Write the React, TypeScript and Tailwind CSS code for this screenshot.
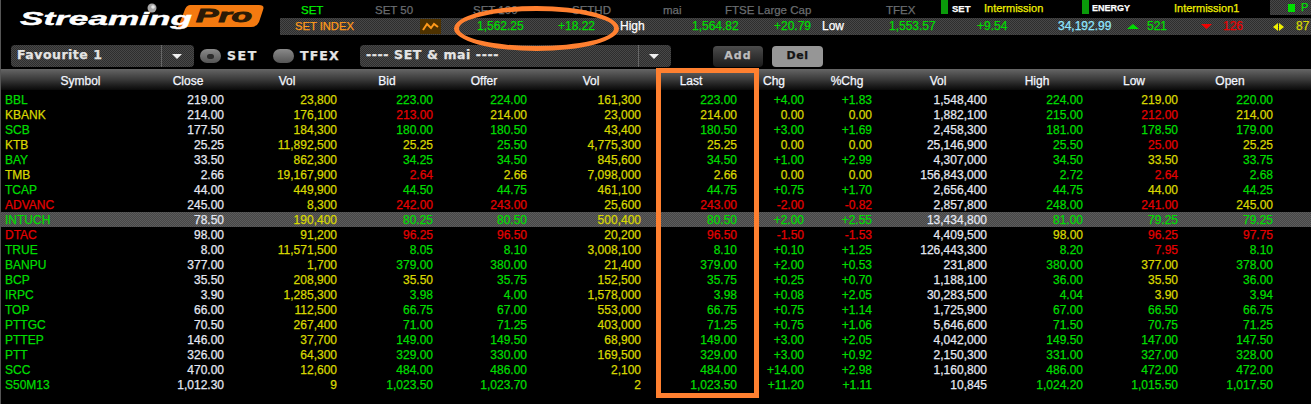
import React from "react";

const tone: Record<string, string> = {
  g: "text-[#00dc00]",
  y: "text-[#d8d800]",
  r: "text-[#e40000]",
  w: "text-[#e4e8f2]",
};

const rows = [
  "gBBL w219.00 y23,800 g223.00 g224.00 y161,300 g223.00 g+4.00 g+1.83 w1,548,400 g224.00 y219.00 g220.00",
  "yKBANK w214.00 y176,100 r213.00 y214.00 y23,000 y214.00 y0.00 y0.00 w1,882,100 g215.00 r212.00 y214.00",
  "gSCB w177.50 y184,300 g180.00 g180.50 y43,400 g180.50 g+3.00 g+1.69 w2,458,300 g181.00 g178.50 g179.00",
  "yKTB w25.25 y11,892,500 y25.25 g25.50 y4,775,300 y25.25 y0.00 y0.00 w25,146,900 g25.50 r25.00 y25.25",
  "gBAY w33.50 y862,300 g34.25 g34.50 y845,600 g34.50 g+1.00 g+2.99 w4,307,000 g34.50 y33.50 g33.75",
  "yTMB w2.66 y19,167,900 r2.64 y2.66 y7,098,000 y2.66 y0.00 y0.00 w156,843,000 g2.72 r2.64 g2.68",
  "gTCAP w44.00 y449,900 g44.50 g44.75 y461,100 g44.75 g+0.75 g+1.70 w2,656,400 g44.75 y44.00 g44.25",
  "rADVANC w245.00 y8,300 r242.00 r243.00 y25,600 r243.00 r-2.00 r-0.82 w2,857,800 g248.00 r241.00 y245.00",
  "gINTUCH w78.50 y190,400 g80.25 g80.50 y500,400 g80.50 g+2.00 g+2.55 w13,434,800 g81.00 g79.25 g79.25",
  "rDTAC w98.00 y91,200 r96.25 r96.50 y20,200 r96.50 r-1.50 r-1.53 w4,409,500 y98.00 r96.25 r97.75",
  "gTRUE w8.00 y11,571,500 g8.05 g8.10 y3,008,100 g8.10 g+0.10 g+1.25 w126,443,300 g8.20 r7.95 g8.10",
  "gBANPU w377.00 y1,700 g379.00 g380.00 y21,400 g379.00 g+2.00 g+0.53 w231,800 g380.00 y377.00 g378.00",
  "gBCP w35.50 y208,900 y35.50 g35.75 y152,500 g35.75 g+0.25 g+0.70 w1,188,100 g36.00 y35.50 g36.00",
  "gIRPC w3.90 y1,285,300 g3.98 g4.00 y1,578,000 g3.98 g+0.08 g+2.05 w30,283,500 g4.04 y3.90 g3.94",
  "gTOP w66.00 y112,500 g66.75 g67.00 y553,000 g66.75 g+0.75 g+1.14 w1,725,900 g67.00 g66.50 g66.75",
  "gPTTGC w70.50 y267,400 g71.00 g71.25 y403,000 g71.25 g+0.75 g+1.06 w5,646,600 g71.50 g70.75 g71.25",
  "gPTTEP w146.00 y37,700 g149.00 g149.50 y68,900 g149.00 g+3.00 g+2.05 w4,042,000 g149.50 g147.00 g147.50",
  "gPTT w326.00 y64,300 g329.00 g330.00 y169,500 g329.00 g+3.00 g+0.92 w2,150,300 g331.00 g327.00 g328.00",
  "gSCC w470.00 y12,600 g484.00 g486.00 y2,100 g484.00 g+14.00 g+2.98 w1,160,800 g486.00 g472.00 g472.00",
  "gS50M13 w1,012.30 y9 g1,023.50 g1,023.70 y2 g1,023.50 g+11.20 g+1.11 w10,845 g1,024.20 g1,015.50 g1,017.50",
];

const headers = ["Symbol", "Close", "Vol", "Bid", "Offer", "Vol", "Last", "Chg", "%Chg", "Vol", "High", "Low", "Open"];

const checker = "bg-[repeating-conic-gradient(#484848_0_25%,#2e2e2e_0_50%)] bg-[length:2px_2px]";
const checkerLight = "bg-[repeating-conic-gradient(#5c5c5c_0_25%,#464646_0_50%)] bg-[length:2px_2px]";
const rowCols =
  "grid-cols-[149px_74px_113px_96px_94px_114px_96px_67px_68px_115px_96px_95px_95px_1fr]";
const wide = "font-['DejaVu_Sans',sans-serif] font-bold text-[#e4e4e4]";

const Logo = () => (
  <svg width="279" height="45" viewBox="1 0 279 45" className="shrink-0">
    <path
      d="M190 5H259Q265 5 263 10L259 22Q257 27 251 27H178L184 12Q186 5 190 5Z"
      fill="#f47a10"
    />
    <text
      x="196"
      y="22"
      fontSize="19"
      fontWeight="700"
      fontStyle="italic"
      fontFamily="Liberation Sans, sans-serif"
      textLength="56"
      lengthAdjust="spacingAndGlyphs"
      fill="#2b1a06"
      stroke="#2b1a06"
      strokeWidth="0.9"
    >
      Pro
    </text>
    <text
      x="20"
      y="25"
      fontSize="18"
      fontWeight="700"
      fontStyle="italic"
      fontFamily="Liberation Sans, sans-serif"
      textLength="172"
      lengthAdjust="spacingAndGlyphs"
      fill="#ffffff"
      stroke="#ffffff"
      strokeWidth="0.4"
    >
      Streaming
    </text>
    <circle cx="152" cy="8" r="4.5" fill="#a8a8a8" />
    <circle cx="153" cy="7" r="1.8" fill="#e8e8e8" />
  </svg>
);

const Caret = () => (
  <svg width="10" height="5" viewBox="0 0 10 5">
    <path d="M0 0H10L5 5Z" fill="#f0f0f0" />
  </svg>
);

const Select = ({ label, className }: { label: string; className: string }) => (
  <div className={`flex h-[22px] items-stretch rounded-[4px] ${checker} ${className}`}>
    <span className={`flex-1 pl-[6px] text-[12.5px] leading-[20px] ${wide}`}>{label}</span>
    <span className="flex w-[33px] items-center justify-center border-l border-[#666] pr-[3px]">
      <Caret />
    </span>
  </div>
);

const Radio = ({ on }: { on?: boolean }) => (
  <span className="flex h-[14px] w-[21px] items-center justify-center rounded-full bg-gradient-to-b from-[#8a8a8a] to-[#555]">
    {on && <span className="h-[5px] w-[7px] rounded-full bg-[#2c2c2c]" />}
  </span>
);

const App = () => {
  return (
    <div className="relative h-[404px] w-[1311px] overflow-hidden border-l border-[#555] bg-black font-['Liberation_Sans',Arial,sans-serif] text-[12px] [-webkit-text-stroke-width:0.25px]">
      <div className="flex h-[35px] items-start">
        <div className="h-[35px] w-[279px] shrink-0 overflow-visible">
          <Logo />
        </div>
        <div className="flex-1">
          <div className="grid h-[18px] grid-cols-[74px_98px_99px_91px_62px_161px_55px_11px_32px_98px_10px_82px_96px_41px] items-start pl-[21px] text-[11.5px] leading-[20px] text-[#6a6d70]">
            <span className="text-[#00f000]">SET</span>
            <span>SET 50</span>
            <span>SET 100</span>
            <span>SETHD</span>
            <span>mai</span>
            <span>FTSE Large Cap</span>
            <span>TFEX</span>
            <span className="h-[14px] w-[7px] bg-[#0a9a0a]" />
            <span className="text-[9.5px] leading-[17px] font-bold text-white">SET</span>
            <span className="text-[11px] leading-[17px] text-[#f0f000]">Intermission</span>
            <span className="h-[14px] w-[7px] bg-[#0a9a0a]" />
            <span className="text-[9px] leading-[17px] font-bold text-white">ENERGY</span>
            <span className="text-[11px] leading-[17px] text-[#f0f000]">Intermission1</span>
            <span className={`flex h-[15px] items-center pl-[18px] ${checker}`}>
              <span className="h-[8px] w-[7px] bg-[#00e000]" />
              <span className="ml-[6px] text-[11px] leading-[15px] text-[#00e000]">P</span>
            </span>
          </div>
          <div
            className={`grid h-[17px] grid-cols-[125px_57px_81px_62px_72px_82px_48px_67px_88px_81px_69px_20px_54px_22px_50px_23px_15px] items-center overflow-hidden pl-[15px] leading-[17px] ${checker}`}
          >
            <span className="text-[11.2px] text-[#ff9a1a]">SET INDEX</span>
            <span className="flex h-[15px] w-[21px] items-center justify-center bg-[#4e3200]">
              <svg width="17" height="9" viewBox="0 0 17 9">
                <path d="M1 8L5 2L9 6L12 2L16 5" fill="none" stroke="#ff9a1a" strokeWidth="2" />
              </svg>
            </span>
            <span className={tone.g}>1,562.25</span>
            <span className={tone.g}>+18.22</span>
            <span className="text-white">High</span>
            <span className={tone.g}>1,564.82</span>
            <span className={tone.g}>+20.79</span>
            <span className="text-white">Low</span>
            <span className={tone.g}>1,553.57</span>
            <span className={tone.g}>+9.54</span>
            <span className="text-[#8fe6ff]">34,192.99</span>
            <svg width="12" height="5" viewBox="0 0 12 5">
              <path d="M0 5H12L6 0Z" fill="#00dc00" />
            </svg>
            <span className={tone.g}>521</span>
            <svg width="11" height="5" viewBox="0 0 11 5">
              <path d="M0 0H11L5.5 5Z" fill="#f00000" />
            </svg>
            <span className={tone.r}>126</span>
            <svg width="11" height="8" viewBox="0 0 11 8">
              <path d="M0 4L5 0V8Z M6 0L11 4L6 8Z" fill="#f0f000" />
            </svg>
            <span className={tone.y}>87</span>
          </div>
        </div>
      </div>

      <div className="mt-[10px] flex h-[22px] items-center pl-[10px]">
        <Select label="Favourite 1" className="w-[183px] tracking-[0.5px]" />
        <span className="ml-[6px]">
          <Radio on />
        </span>
        <span className={`ml-[6px] w-[46px] text-[12.5px] tracking-[1.6px] ${wide}`}>SET</span>
        <Radio />
        <span className={`ml-[6px] w-[60px] text-[12.5px] tracking-[1.1px] ${wide}`}>TFEX</span>
        <Select label="---- SET & mai ----" className="w-[311px] tracking-[0.6px]" />
        <span className="ml-[42px] flex h-[21px] w-[50px] items-center justify-center rounded-[4px] bg-gradient-to-b from-[#4c4c4c] to-[#1c1c1c] font-['DejaVu_Sans',sans-serif] text-[11px] font-bold tracking-[1px] text-[#bdbdbd]">
          Add
        </span>
        <span className="ml-[9px] flex h-[21px] w-[51px] items-center justify-center rounded-[4px] bg-[#969696] font-['DejaVu_Sans',sans-serif] text-[11px] font-bold tracking-[0.5px] text-[#141414]">
          Del
        </span>
      </div>

      <div className="mt-[2px] grid h-[21px] grid-cols-[159px_56px_142px_58px_136px_78px_122px_44px_102px_80px_118px_76px_116px] bg-gradient-to-b from-[#666] via-[#3a3a3a] to-[#0a0a0a] text-center leading-[24px] text-[#f4f7ff]">
        {headers.map((h, i) => (
          <span key={i}>{h}</span>
        ))}
      </div>

      <div className="mt-[2px]">
        {rows.map((row) => {
          const cells = row.split(" ");
          const picked = cells[0].slice(1) === "INTUCH";
          return (
            <div
              key={cells[0]}
              className={`grid h-[15px] ${rowCols} leading-[16px] ${picked ? checkerLight : ""}`}
            >
              {cells.map((c, i) => (
                <span key={i} className={`${tone[c[0]]} ${i === 0 ? "pl-[4px]" : "text-right"}`}>
                  {c.slice(1)}
                </span>
              ))}
            </div>
          );
        })}
      </div>

      {/* annotations drawn over the screen */}
      <div className="absolute top-[6px] left-[453px] h-[45px] w-[165px] rounded-[50%] border-[5px] border-[#ff8030]" />
      <div className="absolute top-[68px] left-[655px] h-[330px] w-[103px] border-[5px] border-[#ff8030]" />
    </div>
  );
};

export default App;
